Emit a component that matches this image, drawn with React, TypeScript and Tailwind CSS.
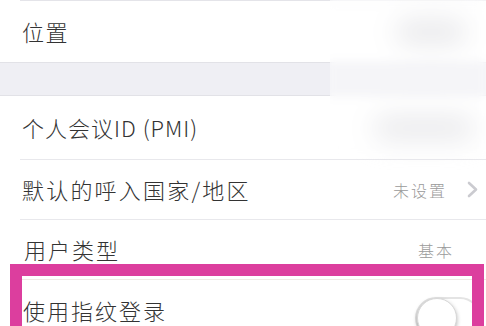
import React from "react";

function Chevron() {
  return (
    <svg width="11" height="17" viewBox="0 0 11 17" className="shrink-0">
      <polyline points="2,2 9,8.5 2,15" fill="none" stroke="#cbcbd0" strokeWidth="2.6" strokeLinecap="round" strokeLinejoin="round" />
    </svg>
  );
}

export default function App() {
  return (
    <div
      className="relative w-[486px] h-[326px] overflow-hidden bg-white text-[#333333]"
      style={{ fontFamily: '"Noto Sans CJK SC", "Noto Sans", sans-serif' }}
    >
      <div className="ml-[20px] h-[1px] bg-[#e4e4e9]" />
      <div className="h-[61px] flex items-center justify-between pl-[22px] pr-[16px]">
        <span className="text-[22px] tracking-[1.5px] font-light">位置</span>
        <div className="w-[70px] h-[26px] rounded-full bg-[#dcdce0] blur-md mr-[4px]" />
      </div>
      <div className="h-[34px] bg-[#efeff4] border-y border-[#e2e2e7]" />
      <div className="h-[63px] flex items-center justify-between pl-[22px] pr-[12px]">
        <span className="text-[22px] tracking-[1px] font-light">个人会议ID (PMI)</span>
        <div className="w-[100px] h-[26px] rounded-full bg-[#dedee2] blur-md" />
      </div>
      <div className="ml-[20px] h-[1px] bg-[#e8e8ec]" />
      <div className="h-[59px] flex items-center justify-between pl-[22px] pr-[8px]">
        <span className="text-[22px] tracking-[2.2px] font-light">默认的呼入国家/地区</span>
        <div className="flex items-center gap-[20px]">
          <span className="text-[16px] tracking-[2px] text-[#9a9a9a] font-light">未设置</span>
          <Chevron />
        </div>
      </div>
      <div className="ml-[20px] h-[1px] bg-[#e8e8ec]" />
      <div className="h-[59px] flex items-center justify-between pl-[24px] pr-[32px]">
        <span className="text-[22px] tracking-[2px] font-light">用户类型</span>
        <span className="text-[16px] tracking-[2px] text-[#9a9a9a] font-light">基本</span>
      </div>
      <div className="ml-[20px] h-[1px] bg-[#efe9e4]" />
      <div className="h-[60px] flex items-center justify-between pl-[23px] pr-[5px]">
        <span className="text-[22px] tracking-[2px] font-light">使用指纹登录</span>
        <div className="w-[66px] h-[42px] rounded-full border-2 border-[#e4e4e4] bg-white flex items-center mt-[16px]">
          <div className="w-[40px] h-[40px] rounded-full bg-white border border-[#d8d8d8] shadow-[0_2px_4px_rgba(0,0,0,0.3)]" />
        </div>
      </div>

      <div className="absolute left-[330px] top-0 w-[156px] h-[158px] bg-white/40 backdrop-blur-[5px]" />
      <div className="absolute left-[10px] top-[264px] w-[474px] h-[80px] border-[12px] border-[#dc3e9e]" />
    </div>
  );
}
